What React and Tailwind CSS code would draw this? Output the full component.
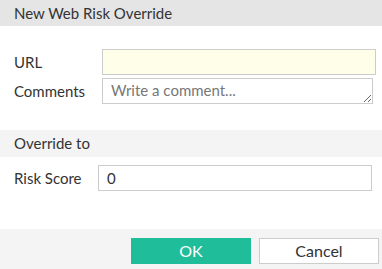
export default function App() {
  return (
    <div
      className="w-[382px] h-[269px] bg-white flex flex-col text-[15px] text-[#333]"
      style={{ fontFamily: "Lato, 'Open Sans', sans-serif" }}
    >
      <div className="h-[26px] bg-[#e5e5e5] px-[14px] flex items-center leading-none">
        New Web Risk Override
      </div>

      <div className="pt-[23px] pl-[14px] flex flex-col gap-[3px]">
        <div className="flex items-center">
          <label className="w-[88px] leading-none">URL</label>
          <input
            className="w-[274px] h-[26px] border border-[#ccc] bg-[#fefee9] outline-none px-2"
            type="text"
          />
        </div>
        <div className="flex items-center">
          <label className="w-[88px] leading-none">Comments</label>
          <textarea
            className="w-[271px] h-[26px] border border-[#ccc] bg-white outline-none px-2 py-[1px] leading-[20px] placeholder:text-[#777] block"
            placeholder="Write a comment..."
          />
        </div>
      </div>

      <div className="mt-[26px] h-[27px] bg-[#f4f4f4] px-[14px] flex items-center leading-none">
        Override to
      </div>

      <div className="mt-[8px] pl-[14px] flex items-center">
        <label className="w-[84px] leading-none">Risk Score</label>
        <input
          className="w-[274px] h-[26px] border border-[#ccc] bg-white outline-none px-2"
          type="text"
          defaultValue="0"
        />
      </div>

      <div className="mt-auto h-[40px] bg-[#f4f4f4] flex justify-end items-start pt-[9px] pr-[3px] gap-[8px]">
        <button className="w-[120px] h-[26px] bg-[#20bd9a] text-white text-[16px] leading-none">
          OK
        </button>
        <button className="w-[120px] h-[26px] bg-white border border-[#ccc] text-[#333] text-[16px] leading-none">
          Cancel
        </button>
      </div>
    </div>
  );
}
